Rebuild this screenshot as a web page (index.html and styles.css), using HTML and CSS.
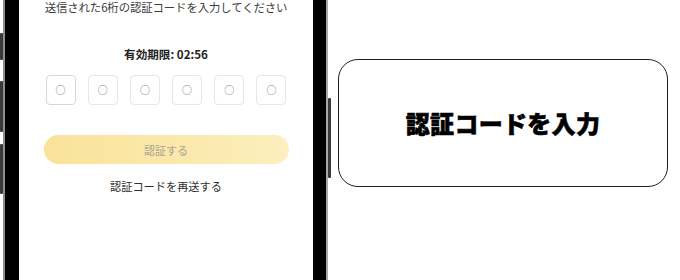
FILE: index.html
```html
<!DOCTYPE html>
<html lang="ja">
<head>
<meta charset="utf-8">
<link rel="stylesheet" href="styles.css">
</head>
<body>
<div class="stage">
  <div class="phone">
    <span class="btn-side b1"></span>
    <span class="btn-side b2"></span>
    <span class="btn-side b3"></span>
    <span class="btn-right"></span>
    <div class="screen">
      <p class="lead">送信された6桁の認証コードを入力してください</p>
      <p class="timer">有効期限: 02:56</p>
      <div class="codes">
        <div class="code focus">○</div>
        <div class="code">○</div>
        <div class="code">○</div>
        <div class="code">○</div>
        <div class="code">○</div>
        <div class="code">○</div>
      </div>
      <div class="verify">認証する</div>
      <p class="resend">認証コードを再送する</p>
    </div>
  </div>
  <div class="card">
    <h1 class="title">認証コードを入力</h1>
  </div>
</div>
</body>
</html>
```
FILE: styles.css
```css
* { box-sizing: border-box; }
html, body {
  margin: 0;
  padding: 0;
  width: 680px;
  height: 280px;
  overflow: hidden;
  background: #fff;
  font-family: "Noto Sans CJK JP", "Noto Sans", sans-serif;
}
.stage {
  display: flex;
  align-items: flex-start;
  height: 280px;
  padding-left: 3px;
}
.phone {
  position: relative;
  width: 325px;
  height: 280px;
  background: #000;
  border-left: 2px solid #8e8e8e;
  border-right: 2px solid #a8a8a8;
  padding: 0 13px 0 14px;
  flex: none;
}
.btn-side {
  position: absolute;
  left: -5px;
  width: 3px;
  background: #3a3a3a;
  border-radius: 1px;
}
.b1 { top: 33px; height: 27px; }
.b2 { top: 81px; height: 51px; }
.b3 { top: 144px; height: 50px; }
.btn-right {
  position: absolute;
  right: -5px;
  top: 98px;
  width: 3px;
  height: 80px;
  background: #3a3a3a;
  border-radius: 1px;
}
.screen {
  background: #fff;
  height: 100%;
  display: flex;
  flex-direction: column;
  align-items: center;
}
.lead {
  margin: -1px 0 0;
  font-size: 11.4px;
  line-height: 16px;
  color: #3c3c3c;
  letter-spacing: -0.1px;
}
.timer {
  margin: 31px 0 0;
  font-size: 11.6px;
  line-height: 16px;
  font-weight: 700;
  color: #222;
}
.codes {
  margin-top: 13px;
  display: flex;
  gap: 12.2px;
}
.code {
  width: 30px;
  height: 30px;
  border: 1px solid #e6e6e6;
  border-radius: 4px;
  display: flex;
  align-items: center;
  justify-content: center;
  font-size: 10px;
  color: #7a7a7a;
  line-height: 1;
}
.code.focus { border-color: #d6d6d6; }
.verify {
  margin-top: 30px;
  width: 245px;
  height: 29px;
  border-radius: 15px;
  background: linear-gradient(90deg, #fae29a 0%, #fbe9ac 60%, #fdefbf 100%);
  color: #a9a493;
  font-size: 11px;
  display: flex;
  align-items: center;
  justify-content: center;
}
.resend {
  margin: 14px 0 0;
  font-size: 11.2px;
  line-height: 16px;
  color: #2e2e2e;
}
.card {
  margin: 59px 0 0 10px;
  width: 330px;
  height: 128px;
  border: 1px solid #1e1e1e;
  border-radius: 20px;
  display: flex;
  align-items: center;
  justify-content: center;
  flex: none;
}
.title {
  margin: -2px 0 0;
  font-size: 24px;
  font-weight: 900;
  color: #000;
  letter-spacing: 0.3px;
  -webkit-text-stroke: 0.6px #000;
}
```
